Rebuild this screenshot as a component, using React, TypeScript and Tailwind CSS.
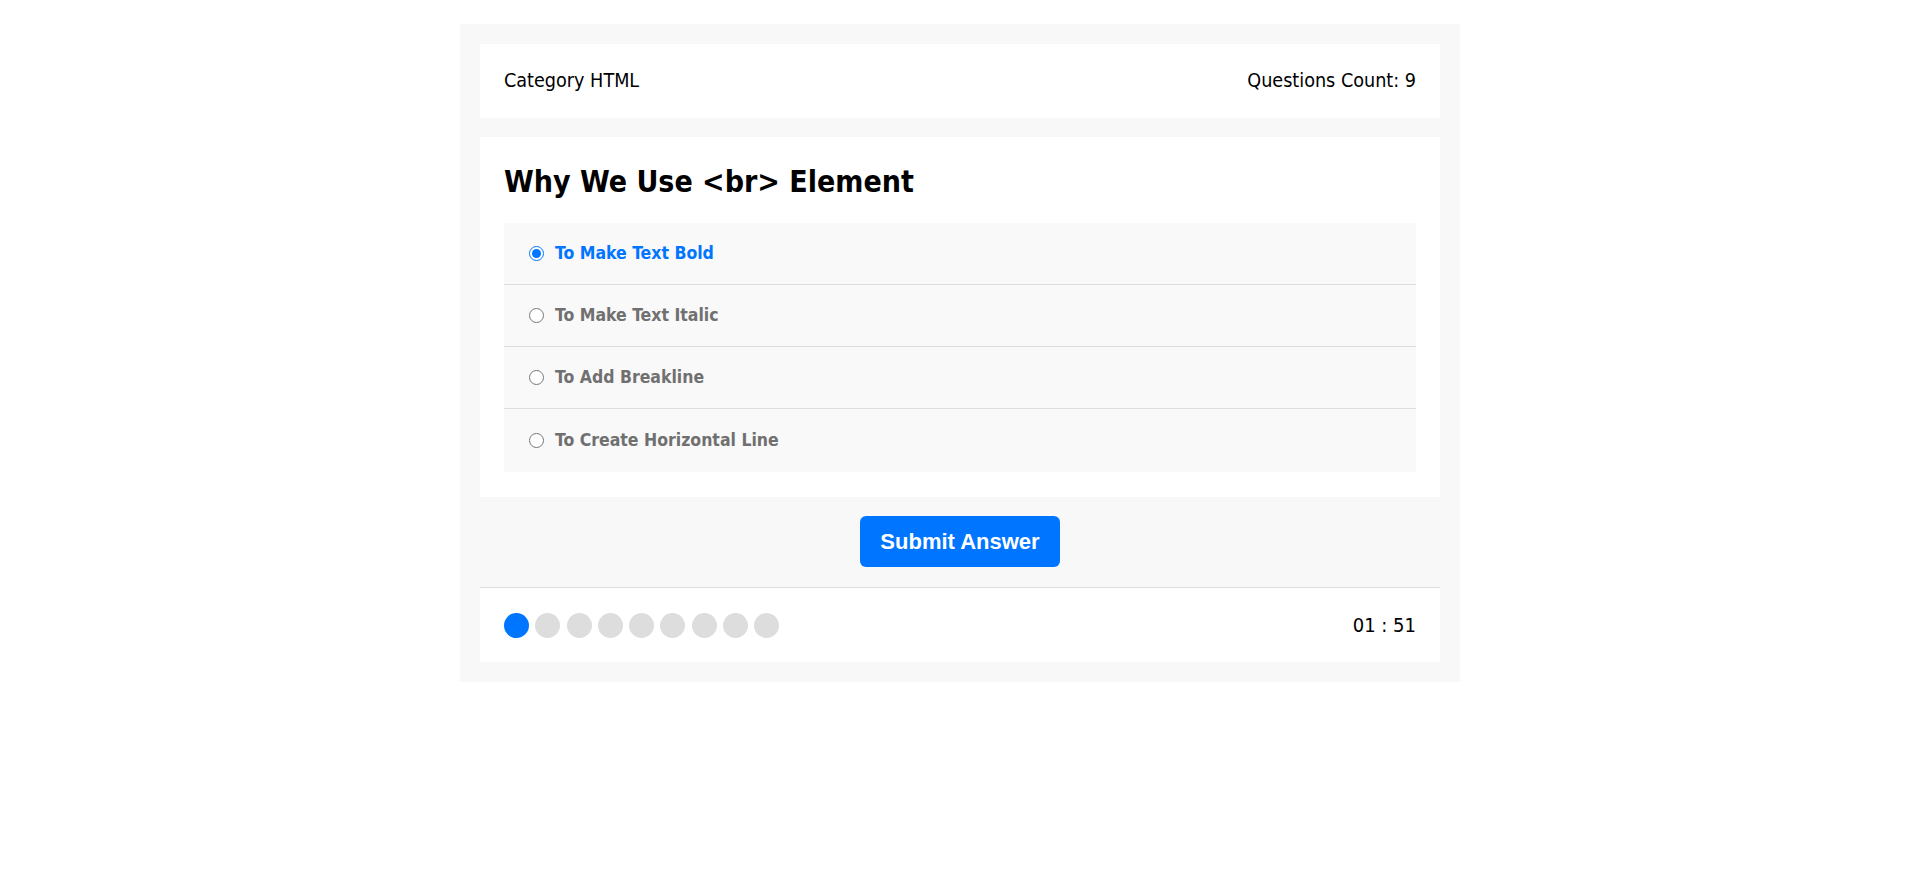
import React, { useState } from "react";

const options = [
    "To Make Text Bold",
    "To Make Text Italic",
    "To Add Breakline",
    "To Create Horizontal Line",
];

export default function App() {
    const [picked, setPicked] = useState(0);

    return (
        <div className="min-h-screen bg-white font-['DejaVu_Sans_Condensed','DejaVu_Sans',sans-serif] font-stretch-condensed text-black">
            <div className="w-[1000px] mx-auto mt-6 px-5 pt-5 pb-5 bg-[#f8f8f8]">
                <div className="h-[74px] px-6 flex items-center justify-between bg-white text-[19.6px]">
                    <span>Category HTML</span>
                    <span>Questions Count: 9</span>
                </div>

                <div className="mt-[19px] bg-white px-6 pt-[27px] pb-[25px]">
                    <h2 className="text-[30px] leading-[36px] font-bold mb-[23px]">Why We Use &lt;br&gt; Element</h2>
                    <ul className="bg-[#f9f9f9]">
                        {options.map((opt, i) => (
                            <li
                                key={opt}
                                className={`pl-[25px] flex items-center ${i < options.length - 1 ? "h-[62px] border-b border-[#dddddd]" : "h-[63px]"}`}
                            >
                                <input
                                    type="radio"
                                    name="answer"
                                    id={`opt-${i}`}
                                    checked={picked === i}
                                    onChange={() => setPicked(i)}
                                    className="m-0 w-[15px] h-[15px]"
                                />
                                <label
                                    htmlFor={`opt-${i}`}
                                    className={`ml-[11px] text-[17.5px] font-bold ${picked === i ? "text-[#0075ff]" : "text-[#707070]"}`}
                                >
                                    {opt}
                                </label>
                            </li>
                        ))}
                    </ul>
                </div>

                <div className="mt-[19px] mb-5 flex justify-center">
                    <button className="h-[51px] px-5 rounded-md bg-[#0075ff] text-white text-[22px] font-bold font-['Liberation_Sans',Arial,sans-serif]">
                        Submit Answer
                    </button>
                </div>

                <div className="h-[75px] px-6 flex items-center justify-between bg-white border-t border-[#dddddd]">
                    <div className="flex gap-[6.25px]">
                        {Array.from({ length: 9 }).map((_, i) => (
                            <span
                                key={i}
                                className={`w-[25px] h-[25px] rounded-full ${i === 0 ? "bg-[#0075ff]" : "bg-[#dddddd]"}`}
                            />
                        ))}
                    </div>
                    <span className="text-[20px]">01 : 51</span>
                </div>
            </div>
        </div>
    );
}
